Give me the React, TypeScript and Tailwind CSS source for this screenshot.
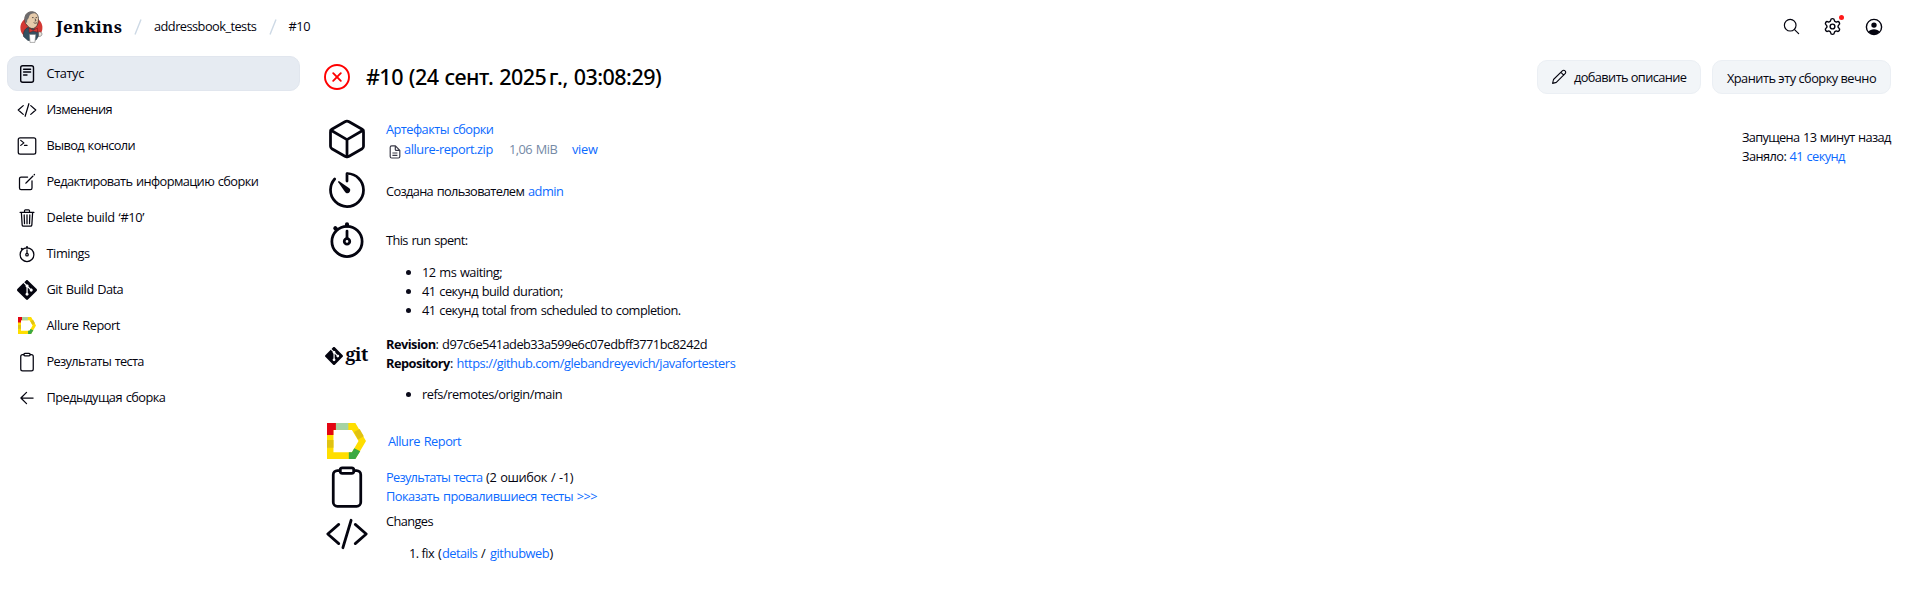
import type { ReactNode } from "react";
import { Settings } from "lucide-react";
import { SiGit } from "react-icons/si";

type IconProps = { className?: string };

const stroke = {
  fill: "none",
  stroke: "currentColor",
  strokeWidth: 32,
  strokeLinecap: "round" as const,
  strokeLinejoin: "round" as const,
};

function Ion({ className = "size-5", children }: IconProps & { children: ReactNode }) {
  return (
    <svg viewBox="0 0 512 512" className={className} {...stroke}>
      {children}
    </svg>
  );
}

const DocIcon = () => (
  <svg viewBox="0 0 20 20" className="size-5" fill="none" stroke="currentColor" strokeWidth="1.4" strokeLinecap="round">
    <rect x="3.7" y="1.8" width="12.8" height="16.4" rx="2" />
    <path d="M6.6 5.2h7M6.6 8h7M6.6 11h3.4" />
  </svg>
);
const CodeIcon = ({ className }: IconProps) => (
  <Ion className={className}>
    <path d="M160 368L32 256l128-112M352 368l128-112-128-112M304 96l-96 320" />
  </Ion>
);
const TerminalIcon = () => (
  <Ion>
    <rect x="32" y="48" width="448" height="416" rx="48" />
    <path d="M96 112l80 64-80 64M192 240h64" />
  </Ion>
);
const EditIcon = () => (
  <Ion>
    <path d="M384 224v184a40 40 0 01-40 40H104a40 40 0 01-40-40V168a40 40 0 0140-40h167.48" />
    <path
      fill="currentColor"
      stroke="none"
      d="M459.94 53.25a16.06 16.06 0 00-23.22-.56L424.35 65a8 8 0 000 11.31l11.34 11.32a8 8 0 0011.34 0l12.06-12c6.1-6.09 6.67-16.01.85-22.38zM399.34 90L218.82 270.2a9 9 0 00-2.31 3.93L208.16 299a3.91 3.91 0 004.86 4.86l24.85-8.35a9 9 0 003.93-2.31L422 112.66a9 9 0 000-12.66l-9.95-10a9 9 0 00-12.71 0z"
    />
  </Ion>
);
const TrashIcon = () => (
  <Ion>
    <path d="M112 112l20 320c.95 18.49 14.4 32 32 32h184c17.67 0 30.87-13.51 32-32l20-320M80 112h352M192 112V72a23.93 23.93 0 0124-24h80a23.93 23.93 0 0124 24v40M256 176v224M184 176l8 224M328 176l-8 224" />
  </Ion>
);
const StopwatchIcon = ({ className }: IconProps) => (
  <Ion className={className}>
    <path d="M256 232v-80" />
    <path strokeWidth="48" d="M256 88V72M132 132l-12-12" />
    <circle cx="256" cy="272" r="32" />
    <circle cx="256" cy="272" r="176" />
  </Ion>
);
const ClipboardIcon = ({ className }: IconProps) => (
  <Ion className={className}>
    <path d="M336 64h32a48 48 0 0148 48v320a48 48 0 01-48 48H144a48 48 0 01-48-48V112a48 48 0 0148-48h32" />
    <rect x="176" y="32" width="160" height="64" rx="26" />
  </Ion>
);
const BackIcon = () => (
  <Ion>
    <path d="M244 400L100 256l144-144M120 256h292" />
  </Ion>
);
const CubeIcon = ({ className }: IconProps) => (
  <Ion className={className}>
    <path d="M448 341.37V170.61A32 32 0 00432.11 143l-152-88.46a47.94 47.94 0 00-48.24 0L79.89 143A32 32 0 0064 170.61v170.76A32 32 0 0079.89 369l152 88.46a48 48 0 0048.24 0l152-88.46A32 32 0 00448 341.37z" />
    <path d="M69 153.99l187 110 187-110M256 463.99v-200" />
  </Ion>
);
const TimerIcon = ({ className }: IconProps) => (
  <Ion className={className}>
    <path d="M112.91 128A191.85 191.85 0 0064 254c-1.18 106.35 85.65 193.8 192 194 106.2.2 192-85.83 192-192 0-104.54-83.55-189.61-187.5-192a4.36 4.36 0 00-4.5 4.37V152" />
    <path
      fill="currentColor"
      stroke="none"
      d="M233.38 278.63l-79-113a8.13 8.13 0 0111.32-11.32l113 79a32.5 32.5 0 01-37.25 53.26 33.21 33.21 0 01-8.07-7.94z"
    />
  </Ion>
);
const SearchIcon = () => (
  <Ion className="size-[19px]">
    <circle cx="221" cy="221" r="157" />
    <path d="M338.29 338.29L448 448" />
  </Ion>
);
const UserIcon = () => (
  <svg viewBox="0 0 18 18" className="size-[18px]">
    <circle cx="9" cy="9" r="7.6" fill="none" stroke="currentColor" strokeWidth="1.4" />
    <circle cx="9" cy="7.1" r="2.7" fill="currentColor" />
    <path d="M3.3 13.8C4.4 12 6.6 11.2 9 11.2s4.6.8 5.7 2.6A8 8 0 019 16.8a8 8 0 01-5.7-3z" fill="currentColor" />
  </svg>
);
const PencilIcon = () => (
  <svg
    viewBox="0 0 16 16"
    className="size-4"
    fill="none"
    stroke="currentColor"
    strokeWidth="1.1"
    strokeLinecap="round"
    strokeLinejoin="round"
  >
    <path d="M1.6 14.4l.9-3.9 8.8-8.7a1.95 1.95 0 012.8 0 1.95 1.95 0 010 2.8l-8.8 8.8zM9.9 3.3l2.8 2.8" />
  </svg>
);
const FileIcon = () => (
  <svg
    viewBox="0 0 12 14"
    className="h-[14px] w-3 shrink-0 text-[#3a3a48]"
    fill="none"
    stroke="currentColor"
    strokeWidth="1.2"
    strokeLinejoin="round"
  >
    <path d="M1.2 2.4c0-.9.6-1.5 1.5-1.5h3.7l4.4 4.4v6.2c0 .9-.6 1.5-1.5 1.5H2.7c-.9 0-1.5-.6-1.5-1.5zM6.3 1v3.4c0 .6.4 1 1 1h3.4M3.4 8h5M3.4 10.4h5" />
  </svg>
);
const AllureIcon = ({ className }: IconProps) => (
  <svg viewBox="0 0 39.3 36.3" className={className} preserveAspectRatio="none">
    <path
      fillRule="evenodd"
      fill="#ffde00"
      d="M0 0h28.6l10.7 18.2-10.7 18.1H0zM6.5 7v22.6h18.6L31.8 18.2 25.1 7z"
    />
    <path fill="#e30613" d="M0 0h9v7H6.5v5H0z" />
    <path fill="#a6d3a3" d="M9 0h12.5v7H9z" />
    <path fill="#e0c212" d="M0 17.2h6.5V25H0zM27.2 9.2l5.7-3.2 4.2 7.3-5.8 3.3z" />
    <path fill="#3ba943" d="M22 29.6h3.1l2.4-4.2 6 3-4.9 7.9H22z" />
  </svg>
);
const FailedIcon = () => (
  <svg viewBox="0 0 26 26" className="size-[26px]" fill="none" stroke="#f00" strokeWidth="1.9" strokeLinecap="round">
    <circle cx="13" cy="13" r="12" />
    <path d="M9.2 9.2l7.6 7.6M16.8 9.2l-7.6 7.6" />
  </svg>
);
const Butler = () => (
  <svg viewBox="0 0 23 32" className="h-8 w-[23px]">
    <circle cx="11.4" cy="16.8" r="11" fill="#d33833" />
    <path d="M3.5 25.5C3 21 5 17.5 8 16.5l7 1.5c3 1.5 4 4 3.6 7l-2.6 4-8 .5z" fill="#335061" stroke="#22303c" strokeWidth=".6" />
    <path d="M5 9.5C4.2 4.5 7 .8 11.6.8c4.8 0 7.2 3.4 6.8 8.4-.3 4-1.6 7.2-4.8 8.2-2.6.6-5.6-1-6.8-3.6C5.6 13.4 5 11.6 5 9.5z" fill="#e6cbab" stroke="#3b3532" strokeWidth=".8" />
    <path d="M5 10.6C3.8 4.6 6.8.9 11.4.7c2 0 3.8.6 5 1.8-3.8-.6-6.2.4-7 2.2-.6 1.3-.6 2.7-1.5 3.4-.9.5-.8 2.6-.8 4z" fill="#6d6b6d" />
    <path d="M12 6.6h1.6M15.6 6.6h1.4M13.6 11.6c1.2.8 2.4.8 3.4 0M15 7.6l.9 2.2-1.2.3" stroke="#3b3532" strokeWidth=".8" fill="none" />
    <path d="M9 17l4 2.2L17.4 17l.2 4.2-4.4-1.2-4 1.6z" fill="#d33833" stroke="#6e1d1b" strokeWidth=".5" />
    <path d="M18.6 21.2c1.6-.8 3.4 0 3.4 1.8 0 1.6-1.4 2.8-3.4 2.4z" fill="#e8e4dc" stroke="#555" strokeWidth=".5" />
    <path d="M9.4 23.4h6.4l-.9 8H10z" fill="#fff" stroke="#7a7a7a" strokeWidth=".6" />
  </svg>
);

const Slash = () => (
  <svg viewBox="0 0 8 16" className="h-4 w-2" stroke="#cdd9e5" strokeWidth="1.4">
    <path d="M7 .6L1 15.4" />
  </svg>
);

function Link({ className = "", children }: { className?: string; children: ReactNode }) {
  return (
    <a href="#" className={"text-[#0b6aff] " + className}>
      {children}
    </a>
  );
}

const nav = [
  { label: "Статус", track: "tracking-[-0.4px]", icon: <DocIcon />, active: true },
  { label: "Изменения", track: "tracking-[-0.62px]", icon: <CodeIcon /> },
  { label: "Вывод консоли", track: "tracking-[-0.6px]", icon: <TerminalIcon /> },
  { label: "Редактировать информацию сборки", track: "tracking-[-0.6px]", icon: <EditIcon /> },
  { label: "Delete build ‘#10’", track: "tracking-[-0.38px]", icon: <TrashIcon /> },
  { label: "Timings", track: "tracking-[-0.43px]", icon: <StopwatchIcon className="size-5" /> },
  { label: "Git Build Data", track: "tracking-[-0.53px]", icon: <SiGit className="size-5" /> },
  { label: "Allure Report", track: "tracking-[-0.47px]", icon: <AllureIcon className="-mt-px -ml-px h-[17px] w-[18px]" /> },
  { label: "Результаты теста", track: "tracking-[-0.675px]", icon: <ClipboardIcon /> },
  { label: "Предыдущая сборка", track: "tracking-[-0.55px]", icon: <BackIcon /> },
];

function Row({ icon, className, children }: { icon: ReactNode; className: string; children: ReactNode }) {
  return (
    <div className={"flex items-start gap-[17.5px] " + className}>
      <div className="flex size-11 shrink-0 items-center justify-center">{icon}</div>
      <div className="whitespace-nowrap">{children}</div>
    </div>
  );
}

const Bullet = ({ className, children }: { className: string; children: ReactNode }) => (
  <li className="flex items-center">
    <span className="mr-[11px] ml-[20px] size-[5px] rounded-full bg-[#0a0a1a]" />
    <span className={className}>{children}</span>
  </li>
);

export default function App() {
  return (
    <div className="h-[599px] overflow-hidden bg-white text-[12.8px] leading-[19px] text-[#04040f] [font-family:'Open_Sans','Noto_Sans',sans-serif] [word-spacing:0.9px]">
      <header className="flex h-[53px] items-center pr-[29px] pl-5">
        <Butler />
        <span className="ml-[13px] w-[66px] text-[17px] font-bold tracking-[0.3px] [font-family:'Noto_Serif','DejaVu_Serif_Condensed',serif]">
          Jenkins
        </span>
        <span className="ml-[12px] flex">
          <Slash />
        </span>
        <span className="ml-[12px] w-[103px] tracking-[-0.54px]">addressbook_tests</span>
        <span className="ml-[12px] flex">
          <Slash />
        </span>
        <span className="ml-[11.5px] tracking-[-0.4px]">#10</span>
        <div className="ml-auto flex items-center">
          <SearchIcon />
          <span className="relative ml-[22px]">
            <Settings className="size-[19px]" strokeWidth={1.8} />
            <span className="absolute -top-[2px] -right-[2px] size-[5px] rounded-full bg-[#ff1a1a]" />
          </span>
          <span className="ml-[23px]">
            <UserIcon />
          </span>
        </div>
      </header>

      <div className="flex pr-[21px] pl-[7px]">
        <nav className="mt-[3px] flex w-[293px] shrink-0 flex-col gap-px">
          {nav.map((n) => (
            <a
              key={n.label}
              href="#"
              className={
                "flex h-[35px] items-center rounded-[10px] border pl-[9px] " +
                (n.active ? "border-[#e1e6ee] bg-[#e6ebf2]" : "border-transparent")
              }
            >
              <span className="mr-[9.5px] flex size-5 items-center justify-center">{n.icon}</span>
              <span className={n.track}>{n.label}</span>
            </a>
          ))}
        </nav>

        <main className="ml-[24px] flex-1">
          <div className="flex h-[48px] items-center">
            <FailedIcon />
            <h1 className="ml-[16px] text-[21.5px] leading-7 font-medium tracking-[-0.53px] text-black [font-family:'Noto_Sans',sans-serif]">
              #10 (24 сент. 2025<span className="[word-spacing:-2.5px]">&nbsp;г.,</span>{" "}03:08:29)
            </h1>
            <div className="ml-auto flex gap-[11px]">
              <button className="flex h-[34px] w-[164px] items-center rounded-[10px] border border-[#ebeff4] bg-[#f2f5f8] pl-[13px]">
                <PencilIcon />
                <span className="ml-[7px] whitespace-nowrap tracking-[-0.6px]">добавить описание</span>
              </button>
              <button className="h-[34px] w-[179px] rounded-[10px] border border-[#ebeff4] bg-[#f2f5f8] pt-[2px] tracking-[-0.5px] whitespace-nowrap">
                Хранить эту сборку вечно
              </button>
            </div>
          </div>

          <div className="mt-4 flex justify-between">
            <div className="pl-[0.5px]">
              <Row className="h-[51px]" icon={<CubeIcon className="size-11" />}>
                <div className="pt-[3px]">
                  <Link className="tracking-[-0.54px]">Артефакты сборки</Link>
                </div>
                <div className="flex pt-px pl-[3px]">
                  <span className="mt-[5px] flex">
                    <FileIcon />
                  </span>
                  <Link className="ml-[3px] w-[105px] tracking-[-0.43px]">allure-report.zip</Link>
                  <span className="w-[63px] tracking-[-0.55px] text-[#758aa6]">1,06 MiB</span>
                  <Link className="tracking-[-0.3px]">view</Link>
                </div>
              </Row>
              <Row className="h-[51px]" icon={<TimerIcon className="size-11" />}>
                <div className="flex pt-[14px]">
                  <span className="w-[142px] tracking-[-0.65px]">Создана пользователем</span>
                  <Link className="tracking-[-0.5px]">admin</Link>
                </div>
              </Row>
              <Row className="h-[115px]" icon={<StopwatchIcon className="-mt-[2px] size-11" />}>
                <div className="pt-3 tracking-[-0.6px]">This run spent:</div>
                <ul className="pt-[13px]">
                  <Bullet className="tracking-[-0.51px]">12 ms waiting;</Bullet>
                  <Bullet className="tracking-[-0.52px]">41 секунд build duration;</Bullet>
                  <Bullet className="tracking-[-0.52px]">41 секунд total from scheduled to completion.</Bullet>
                </ul>
              </Row>
              <Row
                className="h-[85px]"
                icon={
                  <span className="flex w-11 items-center">
                    <SiGit className="size-[18px] shrink-0" />
                    <span className="-mt-[3px] ml-[3px] text-[18px] font-bold tracking-[-0.5px] [font-family:'Noto_Serif','DejaVu_Serif_Condensed',serif]">
                      git
                    </span>
                  </span>
                }
              >
                <div className="pt-px">
                  <b className="tracking-[-0.53px]">Revision</b>
                  <span className="tracking-[-0.52px]">: d97c6e541adeb33a599e6c07edbff3771bc8242d</span>
                </div>
                <div>
                  <b className="tracking-[-0.5px]">Repository</b>
                  <span className="tracking-[-0.5px]">: </span>
                  <Link className="tracking-[-0.43px]">https://github.com/glebandreyevich/javafortesters</Link>
                </div>
                <ul className="pt-3">
                  <Bullet className="tracking-[-0.45px]">refs/remotes/origin/main</Bullet>
                </ul>
              </Row>
              <Row className="h-[46px]" icon={<AllureIcon className="h-[36px] w-[39px]" />}>
                <div className="pt-[13px] pl-[2px]">
                  <Link className="tracking-[-0.48px]">Allure Report</Link>
                </div>
              </Row>
              <Row className="h-[47px]" icon={<ClipboardIcon className="size-11" />}>
                <div className="flex pt-[3px]">
                  <Link className="w-[100px] tracking-[-0.73px]">Результаты теста</Link>
                  <span className="tracking-[-0.38px]">(2 ошибок / -1)</span>
                </div>
                <div>
                  <Link className="tracking-[-0.53px]">Показать провалившиеся тесты &gt;&gt;&gt;</Link>
                </div>
              </Row>
              <Row className="h-[60px]" icon={<CodeIcon className="size-11" />}>
                <div className="tracking-[-0.6px]">Changes</div>
                <div className="flex pt-[13px] pl-[23px]">
                  <span className="w-[12.5px] tracking-[-0.5px]">1.</span>
                  <span className="w-[20.5px] tracking-[-0.5px]">fix (</span>
                  <Link className="w-[39px] tracking-[-0.55px]">details</Link>
                  <span className="w-[9px]">/</span>
                  <Link className="w-[59.5px] tracking-[-0.45px]">githubweb</Link>
                  <span>)</span>
                </div>
              </Row>
            </div>
            <div className="mt-[11px] w-[149px] whitespace-nowrap">
              <div className="tracking-[-0.67px]">Запущена 13 минут назад</div>
              <div className="flex">
                <span className="w-[47.5px] tracking-[-0.56px]">Заняло:</span>
                <Link className="tracking-[-0.6px]">41 секунд</Link>
              </div>
            </div>
          </div>
        </main>
      </div>
    </div>
  );
}
